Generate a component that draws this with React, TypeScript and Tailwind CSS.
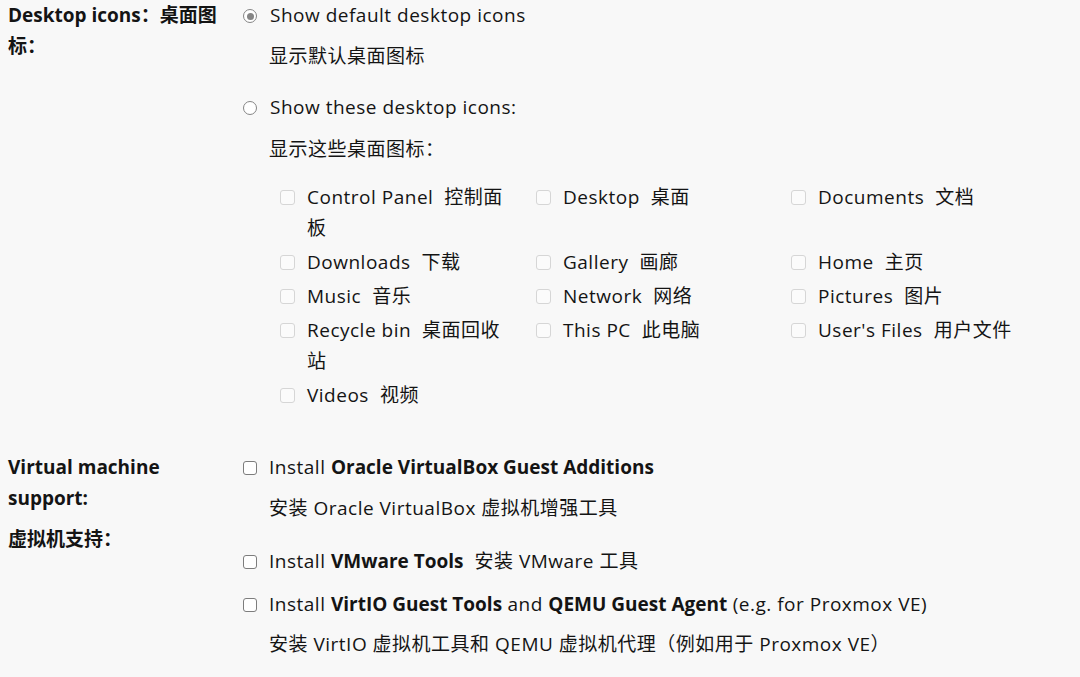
import React from 'react'

const FONT = { fontFamily: '"Open Sans", "Noto Sans CJK SC", sans-serif' }

function Radio({ checked }: { checked?: boolean }) {
  return (
    <span className="mt-[9px] grid h-[14px] w-[14px] flex-shrink-0 place-items-center rounded-full border-[1.5px] border-[#858585] bg-white">
      {checked && <span className="h-[7px] w-[7px] rounded-full bg-[#858585]" />}
    </span>
  )
}

function Check({ disabled }: { disabled?: boolean }) {
  return disabled ? (
    <span className="mt-[8px] h-[15px] w-[15px] flex-shrink-0 rounded-[3px] border border-[#d6d6d6] bg-[#fbfbfb]" />
  ) : (
    <span className="mt-[9px] h-[14px] w-[14px] flex-shrink-0 rounded-[3px] border-[1.5px] border-[#7d7d7d] bg-white" />
  )
}

const ICONS: [string, string][] = [
  ['Control Panel', '控制面板'],
  ['Desktop', '桌面'],
  ['Documents', '文档'],
  ['Downloads', '下载'],
  ['Gallery', '画廊'],
  ['Home', '主页'],
  ['Music', '音乐'],
  ['Network', '网络'],
  ['Pictures', '图片'],
  ['Recycle bin', '桌面回收站'],
  ['This PC', '此电脑'],
  ["User's Files", '用户文件'],
  ['Videos', '视频'],
]

function B({ children }: { children: React.ReactNode }) {
  return <b className="tracking-normal">{children}</b>
}

export default function App() {
  return (
    <div className="min-h-[677px] w-[1080px] bg-[#f8f8f8] pl-2 text-[19px] leading-[31px] tracking-[0.5px] text-[#141414]" style={FONT}>
      {/* Desktop icons */}
      <section className="flex">
        <div className="w-[222px] flex-shrink-0 font-bold tracking-normal">Desktop icons：桌面图标：</div>
        <div className="ml-[13px] flex-1">
          <div className="flex gap-[13px]">
            <Radio checked />
            <span>Show default desktop icons</span>
          </div>
          <p className="mt-[10px] pl-[26px]">显示默认桌面图标</p>

          <div className="mt-[20px] flex gap-[13px]">
            <Radio />
            <span>Show these desktop icons:</span>
          </div>
          <p className="mt-[11px] pl-[26px]">显示这些桌面图标：</p>

          <div className="ml-[37px] mt-[17px] grid grid-cols-[256px_255px_255px] gap-y-[3px]">
            {ICONS.map(([en, zh]) => (
              <div key={en} className="flex gap-[12px]">
                <Check disabled />
                <span className="w-[205px]">
                  {en}
                  <span className="ml-[11px]">{zh}</span>
                </span>
              </div>
            ))}
          </div>
        </div>
      </section>

      {/* Virtual machine support */}
      <section className="mt-[41px] flex">
        <div className="w-[222px] flex-shrink-0 font-bold tracking-normal">
          <p>Virtual machine support:</p>
          <p className="mt-[10px]">虚拟机支持：</p>
        </div>
        <div className="ml-[13px] flex-1">
          <div className="flex gap-[12px]">
            <Check />
            <span>
              Install <B>Oracle VirtualBox Guest Additions</B>
            </span>
          </div>
          <p className="mt-[10px] pl-[26px]">安装 Oracle VirtualBox 虚拟机增强工具</p>

          <div className="mt-[22px] flex gap-[12px]">
            <Check />
            <span>
              Install <B>VMware Tools</B>
              <span className="ml-[11px]">安装 VMware 工具</span>
            </span>
          </div>

          <div className="mt-[12px] flex gap-[12px]">
            <Check />
            <span>
              Install <B>VirtIO Guest Tools</B> and <B>QEMU Guest Agent</B> (e.g. for Proxmox VE)
            </span>
          </div>
          <p className="mt-[9px] pl-[26px]">安装 VirtIO 虚拟机工具和 QEMU 虚拟机代理（例如用于 Proxmox VE）</p>
        </div>
      </section>
    </div>
  )
}
